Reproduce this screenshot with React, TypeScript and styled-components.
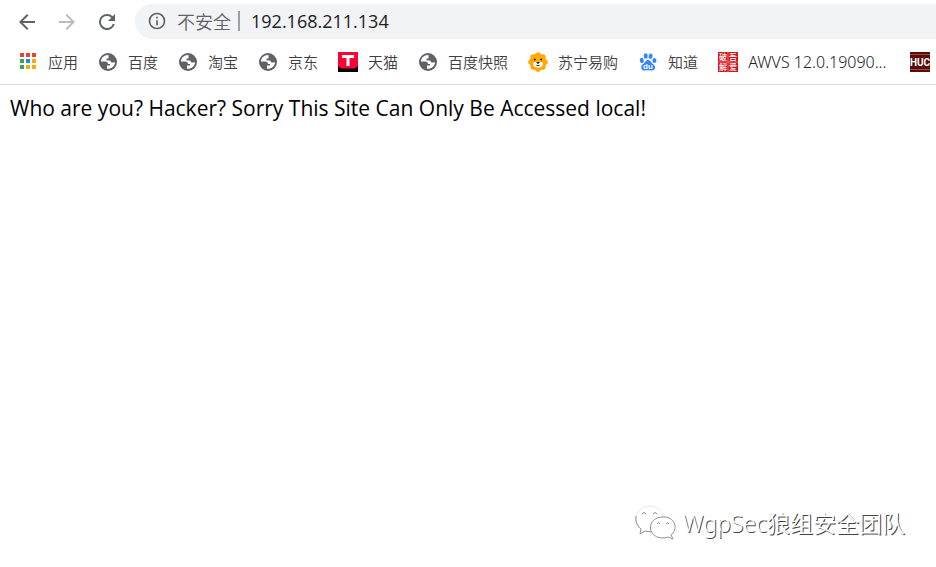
import React from "react";
import styled, { createGlobalStyle } from "styled-components";

const GlobalStyle = createGlobalStyle`
  * { box-sizing: border-box; }
  body {
    margin: 0;
    background: #fff;
    color: #000;
    font-family: "Noto Sans", "Noto Sans CJK SC", sans-serif;
  }
`;

const Browser = styled.div`
  min-height: 100vh;
  display: flex;
  flex-direction: column;
`;

const Toolbar = styled.div`
  display: flex;
  align-items: center;
  padding: 4px 0 0 7px;
`;

const NavButton = styled.button`
  display: grid;
  place-items: center;
  width: 40px;
  height: 35px;
  padding: 0;
  border: 0;
  background: none;
  color: #5f6368;
  &:disabled { color: #babcbe; }
`;

const AddressBar = styled.div`
  flex: 1;
  min-width: 0;
  display: flex;
  align-items: center;
  height: 35px;
  margin-left: 8px;
  padding: 0 0 1px 12px;
  background: #f1f3f4;
  border-radius: 18px 0 0 18px;
  color: #5f6368;
`;

const Security = styled.button`
  display: flex;
  align-items: center;
  gap: 10px;
  padding: 0 7px 0 0;
  border: 0;
  border-right: 2px solid #9aa0a6;
  background: none;
  color: inherit;
  font: 350 18px/20px "Noto Sans CJK SC", sans-serif;
  white-space: nowrap;
`;

const Address = styled.input`
  flex: 1;
  min-width: 0;
  padding: 0 11px;
  border: 0;
  outline: 0;
  background: none;
  color: #202124;
  font: 18px/24px "Open Sans", "Noto Sans", sans-serif;
`;

const Bookmarks = styled.nav`
  display: flex;
  align-items: center;
  gap: 20px;
  height: 46px;
  padding-left: 18px;
  border-bottom: 1px solid #dadce0;
  overflow: hidden;
`;

const Bookmark = styled.a<{ $latin?: boolean }>`
  flex: none;
  display: flex;
  align-items: center;
  gap: 10px;
  min-width: ${(p) => (p.$latin ? "172px" : "0")};
  color: ${(p) => (p.$latin ? "#202124" : "#3c4043")};
  font-family: ${(p) => (p.$latin ? '"Noto Sans"' : '"Noto Sans CJK SC"')}, sans-serif;
  font-size: ${(p) => (p.$latin ? "16px" : "15px")};
  line-height: 20px;
  font-weight: ${(p) => (p.$latin ? 300 : 350)};
  text-decoration: none;
  white-space: nowrap;
`;

const Page = styled.main`
  flex: 1;
  padding: 9px 10px;
`;

const Message = styled.p`
  margin: 0;
  font-family: "Open Sans", "Noto Sans", sans-serif;
  font-size: 21px;
  line-height: 28px;
`;

const Footer = styled.footer`
  display: flex;
  justify-content: flex-end;
  align-items: center;
  gap: 6px;
  padding: 0 31px 25px 0;
  color: #fff;
  font-size: 23px;
  font-weight: 350;
  line-height: 38px;
  text-shadow: 1px 1px 0 #444;
`;

const Icon20 = ({ children, box = "0 0 20 20" }: { children: React.ReactNode; box?: string }) => (
  <svg width="20" height="20" viewBox={box} aria-hidden="true">{children}</svg>
);

const NavIcon = ({ d }: { d: string }) => (
  <svg width="24" height="24" viewBox="0 0 24 24" fill="currentColor" aria-hidden="true"><path d={d} /></svg>
);

const AppsIcon = () => (
  <Icon20>
    {["#ea4335", "#ea4335", "#ea4335", "#34a853", "#1e88f5", "#fbab00", "#34a853", "#fbab00", "#fbab00"].map((c, i) => (
      <rect key={i} x={2 + (i % 3) * 6} y={1 + Math.floor(i / 3) * 6} width="4" height="4" fill={c} />
    ))}
  </Icon20>
);

const GlobeIcon = () => (
  <Icon20>
    <circle cx="10" cy="10" r="9" fill="#5f6368" />
    <path fill="#fff" d="M10.500 3 C6 2.800 3 6 3 9.500 H7.500 C9 9.500 10 10.500 10 12 H12 V13.500 H9 V16.800 C13.500 17.200 17 14 17 10 L16 10.500 H13.500 L12 8.500 H8.500 V6.500 H10.500 Z" />
  </Icon20>
);

const TmallIcon = () => (
  <Icon20>
    <rect width="20" height="20" fill="#ff0036" />
    <path d="M0 14 L3 16.500 H17 L20 14 V20 H0Z" fill="#000" />
    <path d="M4 3H16V6H11.500V14H8.500V6H4Z" fill="#fff" />
  </Icon20>
);

const LionIcon = () => (
  <Icon20>
    <g fill="#ffaa01">
      <circle cx="10" cy="10" r="8.500" />
      {[0, 45, 90, 135, 180, 225, 270, 315].map((a) => (
        <circle key={a} cx="10" cy="2.800" r="2.600" transform={`rotate(${a} 10 10)`} />
      ))}
    </g>
    <path d="M5 11Q7 9 10 10Q13 9 15 11Q15 15.500 10 15.500T5 11Z" fill="#fff" />
    <circle cx="6.800" cy="7.500" r="1" fill="#222" /><circle cx="13.200" cy="7.500" r="1" fill="#222" />
    <path d="M8 10H12L10 12.200ZM7.500 12.500Q10 15.500 12.500 12.500Q10 13.500 7.500 12.500" fill="#222" />
  </Icon20>
);

const PawIcon = () => (
  <Icon20>
    <g fill="#3385ff">
      <ellipse cx="3.800" cy="8.500" rx="2" ry="2.700" transform="rotate(-10 3.800 8.500)" />
      <ellipse cx="7.700" cy="4" rx="2" ry="2.800" />
      <ellipse cx="12.600" cy="4.200" rx="2" ry="2.800" transform="rotate(12 12.600 4.200)" />
      <ellipse cx="16.400" cy="8.500" rx="2" ry="2.600" />
      <path d="M10 8C7.500 8 7.500 10.500 5 12C2 14 3 19 6.500 18.500C9 18 11 18 13.500 18.500C17.500 19 18.500 14.500 15 12C13 10.500 12.500 8 10 8Z" />
    </g>
    <text x="10" y="17" textAnchor="middle" fontFamily="Liberation Sans" fontWeight="700" fontSize="8" fill="#fff">du</text>
  </Icon20>
);

const SealIcon = () => (
  <Icon20>
    <rect width="20" height="20" fill="#d7141b" />
    <path d="M10 0V20M0 10H20" stroke="#f0a0a0" strokeWidth="0.600" />
    <text fill="#fff" fontFamily="Noto Sans CJK SC" fontSize="8" fontWeight="500">
      <tspan x="1" y="8">破</tspan><tspan x="11" y="8">吾</tspan>
      <tspan x="1" y="18">解</tspan><tspan x="11" y="18">爱</tspan>
    </text>
  </Icon20>
);

const HucIcon = () => (
  <Icon20>
    <rect width="20" height="20" fill="#5e0a0b" />
    <path d="M0 2.500H20M0 17.500H20" stroke="#8d5051" />
    <text x="10" y="14" textAnchor="middle" fontFamily="Roboto" fontWeight="700" fontSize="10" fill="#fff">HUC</text>
  </Icon20>
);

const WeChatIcon = () => (
  <svg width="42" height="38" viewBox="0 0 42 38" fill="none" aria-hidden="true">
    <path d="M6 25C-2 19 0 6 10 3C18 0 28 5 28 13" stroke="#ddd" strokeWidth="0.700" />
    <path d="M1 12C0 18 3 23 6 25L5 30L10 27L16 28" stroke="#777" strokeWidth="0.800" />
    <path d="M28 13C20 13 15 18 15.500 24C16 32 25 36 33 33L38 35L36 31C43 26 41 14 30 13Z" fill="#fff" stroke="#777" strokeWidth="0.800" />
    <path d="M7 10Q9 7 11 10M18 10Q20 7 22 10M22 20Q24 17 25 20M31 20Q33 17 34 20" stroke="#666" strokeWidth="0.800" />
  </svg>
);

const bookmarks: { label: string; icon: React.ReactNode; latin?: boolean }[] = [
  { label: "应用", icon: <AppsIcon /> },
  { label: "百度", icon: <GlobeIcon /> },
  { label: "淘宝", icon: <GlobeIcon /> },
  { label: "京东", icon: <GlobeIcon /> },
  { label: "天猫", icon: <TmallIcon /> },
  { label: "百度快照", icon: <GlobeIcon /> },
  { label: "苏宁易购", icon: <LionIcon /> },
  { label: "知道", icon: <PawIcon /> },
  { label: "AWVS 12.0.19090...", icon: <SealIcon />, latin: true },
];

export default function App() {
  return (
    <Browser>
      <GlobalStyle />
      <Toolbar>
        <NavButton aria-label="后退"><NavIcon d="M20 11H7.830l5.590-5.590L12 4l-8 8 8 8 1.410-1.410L7.830 13H20v-2z" /></NavButton>
        <NavButton aria-label="前进" disabled><NavIcon d="M12 4l-1.410 1.410L16.170 11H4v2h12.170l-5.580 5.590L12 20l8-8z" /></NavButton>
        <NavButton aria-label="重新加载"><NavIcon d="M17.650 6.350A7.958 7.958 0 0 0 12 4a8 8 0 1 0 7.730 10h-2.080A5.990 5.990 0 0 1 12 18a6 6 0 1 1 4.220-10.220L13 11h7V4l-2.350 2.350z" /></NavButton>
        <AddressBar>
          <Security>
            <Icon20 box="0 0 24 24">
              <path fill="currentColor" d="M11 7h2v2h-2zm0 4h2v6h-2zm1-9a10 10 0 1 0 0 20 10 10 0 0 0 0-20zm0 18a8 8 0 1 1 0-16 8 8 0 0 1 0 16z" />
            </Icon20>
            不安全
          </Security>
          <Address aria-label="地址" defaultValue="192.168.211.134" />
        </AddressBar>
      </Toolbar>
      <Bookmarks aria-label="书签">
        {bookmarks.map((b) => (
          <Bookmark href="#" key={b.label} $latin={b.latin}>{b.icon}{b.label}</Bookmark>
        ))}
        <Bookmark href="#" aria-label="HUC"><HucIcon /></Bookmark>
      </Bookmarks>
      <Page>
        <Message>Who are you? Hacker? Sorry This Site Can Only Be Accessed local!</Message>
      </Page>
      <Footer><WeChatIcon />WgpSec狼组安全团队</Footer>
    </Browser>
  );
}
